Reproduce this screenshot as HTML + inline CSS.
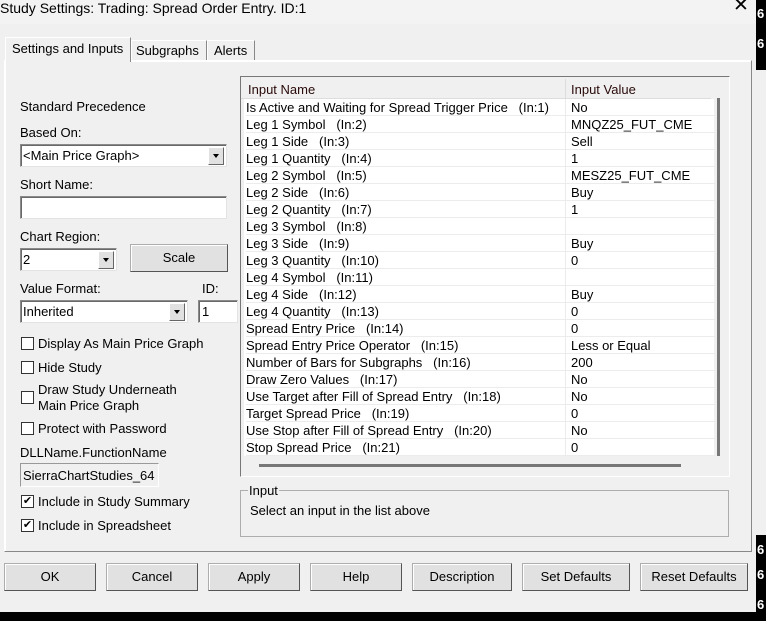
<!DOCTYPE html>
<html><head><meta charset="utf-8"><style>
*{margin:0;padding:0;box-sizing:border-box}
body{width:766px;height:621px;background:#000;font-family:"Liberation Sans",sans-serif;font-size:13px;color:#000;position:relative;overflow:hidden}
.a{position:absolute}
.t{position:absolute;white-space:nowrap;line-height:15px}
.cb{position:absolute;width:13px;height:13px;border:1px solid #333;background:#fff;font-size:11px;line-height:11px;text-align:center}
.btn{position:absolute;height:28px;border:1px solid #adadad;border-right-color:#555;border-bottom-color:#555;background:#e1e1e1;text-align:center;line-height:26px;box-shadow:inset 1px 1px #fff}
.sunk{position:absolute;background:#fff;border:1px solid #8a8a8a;border-right-color:#e3e3e3;border-bottom-color:#e3e3e3;box-shadow:inset 1px 1px #696969}
.dd{position:absolute;width:16px;height:18px;top:2px;right:2px;background:#e1e1e1;border:1px solid #fff;border-right-color:#666;border-bottom-color:#666}
.dd:after{content:"";position:absolute;left:4px;top:6px;border-left:3.5px solid transparent;border-right:3.5px solid transparent;border-top:4px solid #000}
.row{position:absolute;left:3px;width:470px;height:17px;border-bottom:1px solid #ececec}
.row span{position:absolute;top:1px;white-space:nowrap;line-height:15px}
</style></head><body>
<div class="a" style="left:756px;top:70px;width:10px;height:465px;background:#f0f0f0"></div>
<div class="t" style="left:757px;top:6px;color:#fff;font-weight:bold">6</div>
<div class="t" style="left:757px;top:36px;color:#fff;font-weight:bold">6</div>
<div class="t" style="left:757px;top:542px;color:#fff;font-weight:bold">6</div>
<div class="t" style="left:757px;top:567px;color:#fff;font-weight:bold">6</div>
<div class="t" style="left:757px;top:597px;color:#fff;font-weight:bold">6</div>
<div class="a" style="left:0;top:0;width:756px;height:612px;background:#f0f0f0"></div>
<div class="a" style="left:0;top:0;width:756px;height:24px;background:#f3f3f3"></div>
<div class="t" style="left:0;top:1px;font-size:14px">Study Settings: Trading: Spread Order Entry. ID:1</div>
<div class="t" style="left:733px;top:-2px;font-size:19px;font-weight:300">✕</div>
<div class="a" style="left:4px;top:60px;width:748px;height:492px;border:1px solid #fff;border-right-color:#888;border-bottom-color:#888;box-shadow:1px 1px #fff inset"></div>
<div class="a" style="left:5px;top:37px;width:126px;height:25px;background:#f0f0f0;border:1px solid #fff;border-bottom:none;border-right-color:#888"></div>
<div class="t" style="left:12px;top:41px">Settings and Inputs</div>
<div class="a" style="left:131px;top:40px;width:76px;height:20px;border:1px solid #fff;border-bottom:none;border-right-color:#888"></div>
<div class="t" style="left:136px;top:43px">Subgraphs</div>
<div class="a" style="left:207px;top:40px;width:48px;height:20px;border:1px solid #fff;border-bottom:none;border-right-color:#888"></div>
<div class="t" style="left:214px;top:43px">Alerts</div>
<div class="t" style="left:20px;top:99px">Standard Precedence</div>
<div class="t" style="left:20px;top:125px">Based On:</div>
<div class="sunk" style="left:20px;top:144px;width:207px;height:23px"><div class="t" style="left:2px;top:3px">&lt;Main Price Graph&gt;</div><div class="dd"></div></div>
<div class="t" style="left:20px;top:177px">Short Name:</div>
<div class="sunk" style="left:20px;top:196px;width:207px;height:23px"></div>
<div class="t" style="left:20px;top:229px">Chart Region:</div>
<div class="sunk" style="left:20px;top:248px;width:97px;height:23px"><div class="t" style="left:2px;top:3px">2</div><div class="dd"></div></div>
<div class="btn" style="left:130px;top:244px;width:98px">Scale</div>
<div class="t" style="left:20px;top:281px">Value Format:</div>
<div class="t" style="left:202px;top:281px">ID:</div>
<div class="sunk" style="left:20px;top:300px;width:168px;height:23px"><div class="t" style="left:2px;top:3px">Inherited</div><div class="dd"></div></div>
<div class="sunk" style="left:198px;top:300px;width:40px;height:23px"><div class="t" style="left:3px;top:3px">1</div></div>
<div class="cb" style="left:21px;top:337px"></div><div class="t" style="left:38px;top:336px">Display As Main Price Graph</div>
<div class="cb" style="left:21px;top:361px"></div><div class="t" style="left:38px;top:360px">Hide Study</div>
<div class="cb" style="left:21px;top:391px"></div><div class="t" style="left:38px;top:382px">Draw Study Underneath</div><div class="t" style="left:38px;top:398px">Main Price Graph</div>
<div class="cb" style="left:21px;top:422px"></div><div class="t" style="left:38px;top:421px">Protect with Password</div>
<div class="t" style="left:20px;top:445px">DLLName.FunctionName</div>
<div class="a" style="left:20px;top:463px;width:139px;height:24px;border:1px solid #999;border-right-color:#fff;border-bottom-color:#fff;background:#f0f0f0"><div class="t" style="left:2px;top:4px">SierraChartStudies_64</div></div>
<div class="cb" style="left:21px;top:495px">✔</div><div class="t" style="left:38px;top:494px">Include in Study Summary</div>
<div class="cb" style="left:21px;top:519px">✔</div><div class="t" style="left:38px;top:518px">Include in Spreadsheet</div>
<div class="a" style="left:240px;top:76px;width:490px;height:401px;border:1px solid #777;border-right-color:#fff;border-bottom-color:#fff;background:#f0f0f0">
<div class="a" style="left:0;top:0;width:470px;height:22px;background:#f0f0f0;border-bottom:1px solid #ddd"></div>
<div class="a" style="left:324px;top:2px;width:1px;height:20px;background:#ddd"></div>
<div class="t" style="left:7px;top:5px;color:#2a0a0a">Input Name</div>
<div class="t" style="left:330px;top:5px;color:#2a0a0a">Input Value</div>
<div class="a" style="left:3px;top:22px;width:470px;height:357px;background:#fff"></div>
<div class="a" style="left:324px;top:22px;width:1px;height:357px;background:#ececec"></div>
<div class="a" style="left:476px;top:21px;width:3px;height:358px;background:#777"></div>
<div class="a" style="left:18px;top:387px;width:422px;height:3px;background:#777"></div>
</div>
<div class="a" style="left:243px;top:99px">
<div class="row" style="top:0"><span style="left:0">Is Active and Waiting for Spread Trigger Price &nbsp; (In:1)</span><span style="left:325px">No</span></div>
<div class="row" style="top:17px"><span style="left:0">Leg 1 Symbol &nbsp; (In:2)</span><span style="left:325px">MNQZ25_FUT_CME</span></div>
<div class="row" style="top:34px"><span style="left:0">Leg 1 Side &nbsp; (In:3)</span><span style="left:325px">Sell</span></div>
<div class="row" style="top:51px"><span style="left:0">Leg 1 Quantity &nbsp; (In:4)</span><span style="left:325px">1</span></div>
<div class="row" style="top:68px"><span style="left:0">Leg 2 Symbol &nbsp; (In:5)</span><span style="left:325px">MESZ25_FUT_CME</span></div>
<div class="row" style="top:85px"><span style="left:0">Leg 2 Side &nbsp; (In:6)</span><span style="left:325px">Buy</span></div>
<div class="row" style="top:102px"><span style="left:0">Leg 2 Quantity &nbsp; (In:7)</span><span style="left:325px">1</span></div>
<div class="row" style="top:119px"><span style="left:0">Leg 3 Symbol &nbsp; (In:8)</span></div>
<div class="row" style="top:136px"><span style="left:0">Leg 3 Side &nbsp; (In:9)</span><span style="left:325px">Buy</span></div>
<div class="row" style="top:153px"><span style="left:0">Leg 3 Quantity &nbsp; (In:10)</span><span style="left:325px">0</span></div>
<div class="row" style="top:170px"><span style="left:0">Leg 4 Symbol &nbsp; (In:11)</span></div>
<div class="row" style="top:187px"><span style="left:0">Leg 4 Side &nbsp; (In:12)</span><span style="left:325px">Buy</span></div>
<div class="row" style="top:204px"><span style="left:0">Leg 4 Quantity &nbsp; (In:13)</span><span style="left:325px">0</span></div>
<div class="row" style="top:221px"><span style="left:0">Spread Entry Price &nbsp; (In:14)</span><span style="left:325px">0</span></div>
<div class="row" style="top:238px"><span style="left:0">Spread Entry Price Operator &nbsp; (In:15)</span><span style="left:325px">Less or Equal</span></div>
<div class="row" style="top:255px"><span style="left:0">Number of Bars for Subgraphs &nbsp; (In:16)</span><span style="left:325px">200</span></div>
<div class="row" style="top:272px"><span style="left:0">Draw Zero Values &nbsp; (In:17)</span><span style="left:325px">No</span></div>
<div class="row" style="top:289px"><span style="left:0">Use Target after Fill of Spread Entry &nbsp; (In:18)</span><span style="left:325px">No</span></div>
<div class="row" style="top:306px"><span style="left:0">Target Spread Price &nbsp; (In:19)</span><span style="left:325px">0</span></div>
<div class="row" style="top:323px"><span style="left:0">Use Stop after Fill of Spread Entry &nbsp; (In:20)</span><span style="left:325px">No</span></div>
<div class="row" style="top:340px"><span style="left:0">Stop Spread Price &nbsp; (In:21)</span><span style="left:325px">0</span></div>
</div>
<div class="a" style="left:240px;top:490px;width:489px;height:47px;border:1px solid #adadad"></div>
<div class="t" style="left:248px;top:483px;background:#f0f0f0;padding:0 1px">Input</div>
<div class="t" style="left:250px;top:503px">Select an input in the list above</div>
<div class="btn" style="left:4px;top:563px;width:92px">OK</div>
<div class="btn" style="left:106px;top:563px;width:92px">Cancel</div>
<div class="btn" style="left:208px;top:563px;width:92px">Apply</div>
<div class="btn" style="left:310px;top:563px;width:92px">Help</div>
<div class="btn" style="left:412px;top:563px;width:100px">Description</div>
<div class="btn" style="left:522px;top:563px;width:108px">Set Defaults</div>
<div class="btn" style="left:640px;top:563px;width:108px">Reset Defaults</div>
</body></html>
